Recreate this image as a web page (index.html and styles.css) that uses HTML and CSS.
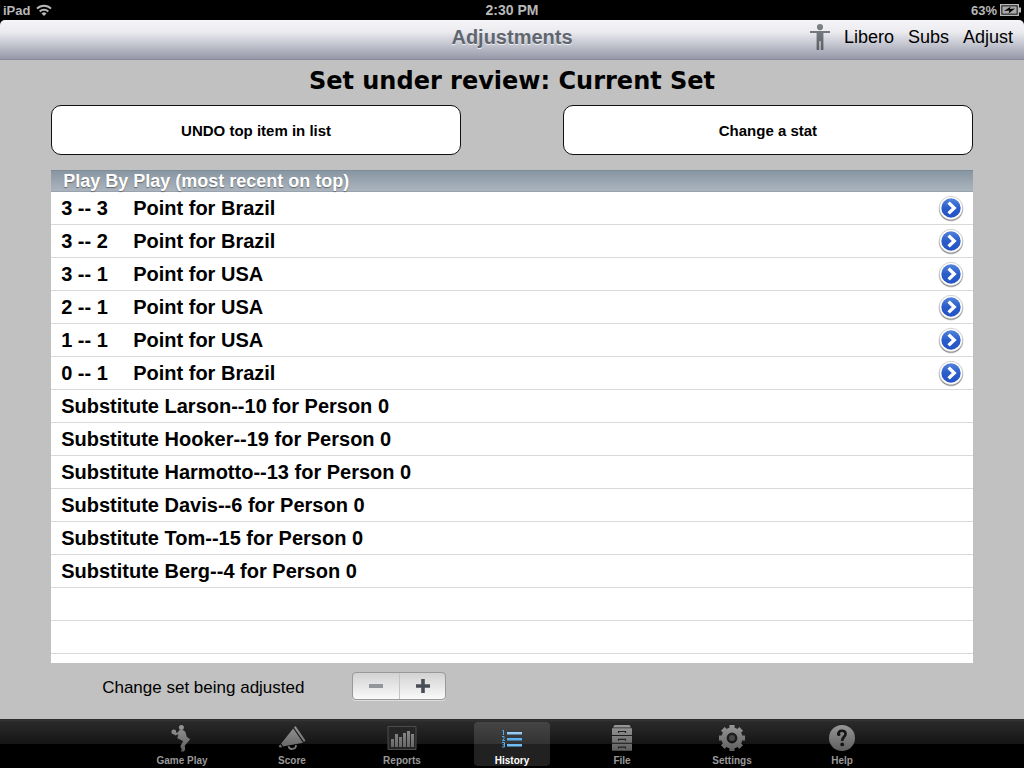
FILE: index.html
```html
<!DOCTYPE html>
<html lang="en">
<head>
    <meta charset="UTF-8">
    <title>Adjustments</title>
    <meta name="viewport" content="width=device-width, initial-scale=1.0">
    <link rel="stylesheet" href="styles.css">
</head>
<body>
    <svg class="defs" width="0" height="0" aria-hidden="true">
        <defs>
            <linearGradient id="blue" x1="0" y1="0" x2="0" y2="1">
                <stop offset="0" stop-color="#5484dc"/>
                <stop offset=".5" stop-color="#2a5dca"/>
                <stop offset="1" stop-color="#2352c4"/>
            </linearGradient>
            <linearGradient id="grey" gradientUnits="userSpaceOnUse" x1="0" y1="0" x2="0" y2="28">
                <stop offset="0" stop-color="#999"/>
                <stop offset="1" stop-color="#5c5c5c"/>
            </linearGradient>
            <linearGradient id="sky" gradientUnits="userSpaceOnUse" x1="0" y1="6" x2="0" y2="24">
                <stop offset="0" stop-color="#b4dcfa"/>
                <stop offset=".5" stop-color="#55aef2"/>
                <stop offset="1" stop-color="#7cc8fa"/>
            </linearGradient>
            <linearGradient id="steel" x1="0" y1="0" x2="0" y2="1">
                <stop offset="0" stop-color="#808388"/>
                <stop offset="1" stop-color="#5b5e63"/>
            </linearGradient>
        </defs>
        <symbol id="disclosure" viewBox="0 0 28 28">
            <circle cx="14" cy="15" r="12.4" fill="#000" opacity=".18"/>
            <circle cx="14" cy="14.8" r="11.8" fill="#000" opacity=".4"/>
            <circle cx="14" cy="14" r="11.7" fill="#fff" stroke="#bbb" stroke-width=".6"/>
            <circle cx="14" cy="14" r="9.7" fill="url(#blue)"/>
            <path d="M11.6 8.6 17.2 14l-5.6 5.4" fill="none" stroke="#fff" stroke-width="3.4"/>
        </symbol>
    </svg>

    <header>
        <div class="status">
            <span class="device">iPad
                <svg width="16" height="12" viewBox="0 0 16 12" aria-hidden="true">
                    <g fill="none" stroke="#b8b8b8" stroke-width="2">
                        <path d="M1 4.6a10 10 0 0 1 14 0"/>
                        <path d="M3.7 7.5a6.2 6.2 0 0 1 8.6 0"/>
                    </g>
                    <path d="M8 12 5.5 9.5a3.5 3.5 0 0 1 5 0z" fill="#b8b8b8"/>
                </svg>
            </span>
            <span class="time">2:30 PM</span>
            <span class="power">63%
                <svg width="21" height="12" viewBox="0 0 21 12" aria-hidden="true">
                    <rect x=".7" y=".7" width="17.6" height="10.6" fill="none" stroke="#b8b8b8" stroke-width="1.4"/>
                    <rect x="2.3" y="2.3" width="14.4" height="7.4" fill="#a8a8a8"/>
                    <path d="M18.5 3.5H21v5h-2.5z" fill="#b8b8b8"/>
                    <path d="m4 7 6.5-4.2-.6 2.3L15 4.6 8.6 9.4l.8-2.8z" fill="#000"/>
                </svg>
            </span>
        </div>
        <nav class="navbar">
            <h1>Adjustments</h1>
            <div class="actions">
                <svg width="20" height="26" viewBox="0 0 20 26" fill="url(#steel)" aria-hidden="true">
                    <path d="M10 0a3.1 3.1 0 1 1 0 6.2A3.1 3.1 0 0 1 10 0zM0 7h20v2.1h-6.6V26h-2.6v-8.8H9.2V26H6.6V9.1H0z"/>
                </svg>
                <a href="#libero">Libero</a>
                <a href="#subs">Subs</a>
                <a href="#adjust">Adjust</a>
            </div>
        </nav>
    </header>

    <main>
        <h2>Set under review: Current Set</h2>
        <div class="buttons">
            <button type="button">UNDO top item in list</button>
            <button type="button">Change a stat</button>
        </div>
        <section class="plays">
            <h3>Play By Play (most recent on top)</h3>
            <ul>
                <li><span class="score">3 -- 3</span>Point for Brazil<button type="button" aria-label="Details"><svg width="28" height="28"><use href="#disclosure"/></svg></button></li>
                <li><span class="score">3 -- 2</span>Point for Brazil<button type="button" aria-label="Details"><svg width="28" height="28"><use href="#disclosure"/></svg></button></li>
                <li><span class="score">3 -- 1</span>Point for USA<button type="button" aria-label="Details"><svg width="28" height="28"><use href="#disclosure"/></svg></button></li>
                <li><span class="score">2 -- 1</span>Point for USA<button type="button" aria-label="Details"><svg width="28" height="28"><use href="#disclosure"/></svg></button></li>
                <li><span class="score">1 -- 1</span>Point for USA<button type="button" aria-label="Details"><svg width="28" height="28"><use href="#disclosure"/></svg></button></li>
                <li><span class="score">0 -- 1</span>Point for Brazil<button type="button" aria-label="Details"><svg width="28" height="28"><use href="#disclosure"/></svg></button></li>
                <li>Substitute Larson--10 for Person 0</li>
                <li>Substitute Hooker--19 for Person 0</li>
                <li>Substitute Harmotto--13 for Person 0</li>
                <li>Substitute Davis--6 for Person 0</li>
                <li>Substitute Tom--15 for Person 0</li>
                <li>Substitute Berg--4 for Person 0</li>
                <li></li>
                <li></li>
            </ul>
        </section>
        <div class="change">
            <span id="change-label">Change set being adjusted</span>
            <div class="stepper" role="group" aria-labelledby="change-label">
                <button type="button" aria-label="Previous set" disabled>
                    <svg width="14" height="14" viewBox="0 0 14 14"><path d="M0 5h14v4H0z" fill="#92959a"/></svg>
                </button>
                <button type="button" aria-label="Next set">
                    <svg width="14" height="14" viewBox="0 0 14 14"><path d="M5.2 0h3.6v5.2H14v3.6H8.8V14H5.2V8.8H0V5.2h5.2z" fill="#484d55"/></svg>
                </button>
            </div>
        </div>
    </main>

    <footer>
        <a href="#game">
            <svg width="28" height="28" viewBox="0 0 28 28" fill="url(#grey)" aria-hidden="true">
                <circle cx="5.800" cy="8" r="2.400"/>
                <circle cx="13.400" cy="3.600" r="2.500"/>
                <path d="M11.500 6.200c2.200-.8 5 .1 6 2l1.200 4.600 3.500 2.400-3.800 4.500-1.700 2 .6 3.300-1.200 2.500h-3.200l.8-2.300-1.400-3 2.800-5-3-1.700-2.800-1.300 1.200-4-3.200 1.300-1.900-2 .9-1.200 3 .4z"/>
            </svg>
            <span>Game Play</span>
        </a>
        <a href="#score">
            <svg width="28" height="28" viewBox="0 0 28 28" fill="url(#grey)" aria-hidden="true">
                <path d="M17.5 2 27.5 16.5 26 18 16 3.5zM15.2 4.400 25 18.800 5 22.400 3.200 19.600zM2.400 20.200l1.800 2.800-2.400.8-1.100-1.700z"/>
                <path d="M10.500 22.200c1 4.200 7.500 3.600 7.500-1.200" fill="none" stroke="#777" stroke-width="1.8"/>
            </svg>
            <span>Score</span>
        </a>
        <a href="#reports">
            <svg width="30" height="28" viewBox="0 0 30 28" aria-hidden="true">
                <path d="M1 2.500h28v23H1z" fill="#262626" stroke="#4c4c4c"/>
                <path d="M4 15h3v8H4zM8 10h3v13H8zM12 13h3v10h-3zM16 9h3v14h-3zM20 7h3v16h-3zM24 10h3v13h-3z" fill="url(#grey)"/>
            </svg>
            <span>Reports</span>
        </a>
        <a href="#history" class="active" aria-current="page">
            <svg width="28" height="28" viewBox="0 0 28 28" aria-hidden="true">
                <path d="M9 8h15v2.500H9zM9 14h15v2.500H9zM9 20h15v2.500H9z" fill="url(#sky)"/>
                <g fill="none" stroke="#55aef2">
                    <path d="m4.500 7 1-1v5M4 12.500h2v2L4.500 16.500h2.500M4 18.500h2.500V23H4M4.500 20.800h2"/>
                </g>
            </svg>
            <span>History</span>
        </a>
        <a href="#file">
            <svg width="28" height="28" viewBox="0 0 28 28" fill="url(#grey)" aria-hidden="true">
                <path d="m6.500 1h15L23 3.400H5z"/>
                <path d="M4 4.200h20v6.700H4zM4 12h20v6.700H4zM4 19.800h20v7H4z"/>
                <path d="M10.500 9V7.500h7V9M10.500 16.800v-1.500h7v1.500M10.500 24.600v-1.500h7v1.500" fill="none" stroke="#222" stroke-width="1.2"/>
            </svg>
            <span>File</span>
        </a>
        <a href="#settings">
            <svg width="28" height="28" viewBox="0 0 28 28" aria-hidden="true">
                <g stroke="url(#grey)" stroke-width="5.200" fill="none">
                    <path d="M14.010 1 14 6M14.010 27 14 22M1 14.010 6 14M27 14.010 22 14M4.800 4.800l3.500 3.500M23.200 4.800l-3.500 3.500M4.800 23.200l3.500-3.500M23.200 23.200l-3.500-3.500"/>
                    <circle cx="14" cy="14" r="8"/>
                </g>
                <circle cx="14" cy="14" r="3" fill="#484848"/>
            </svg>
            <span>Settings</span>
        </a>
        <a href="#help">
            <svg width="28" height="28" viewBox="0 0 28 28" aria-hidden="true">
                <circle cx="14" cy="14" r="13" fill="url(#grey)"/>
                <path d="M10.300 10.500c-.5-5 7.300-4.800 7.300-.8 0 3-3.500 3.200-3.500 7.200" fill="none" stroke="#151515" stroke-width="2.600"/>
                <circle cx="10.800" cy="10.400" r="1.700" fill="#151515"/>
                <circle cx="14.200" cy="20.400" r="1.900" fill="#151515"/>
            </svg>
            <span>Help</span>
        </a>
    </footer>
</body>
</html>
```

FILE: styles.css
```css
*{ margin: 0; padding: 0; box-sizing: border-box; list-style: none}
html,body{
    height: 100%;
}
body{
    display: flex;
    flex-direction: column;
    background: #c1c1c1;
    color: #000;
    font-family: "Liberation Sans", Arial, sans-serif;
}
a{
    color: inherit;
    text-decoration: none;
}
button{
    font-family: inherit;
    color: inherit;
}
svg{
    display: block;
    flex-shrink: 0;
}
.defs{
    position: absolute;
}

/* status + navigation bar */
header{
    background: #000;
}
.status{
    display: grid;
    grid-template-columns: 1fr auto 1fr;
    align-items: center;
    height: 20px;
    padding: 0 3px;
    color: #b8b8b8;
    font-size: 13px;
    font-weight: bold;
}
.device,.power{
    display: flex;
    align-items: center;
    gap: 6px;
}
.power{
    justify-content: flex-end;
    gap: 3px;
}
.time{
    font-size: 14px;
}
.navbar{
    display: grid;
    grid-template-columns: 1fr auto 1fr;
    align-items: center;
    height: 40px;
    padding: 0 11px 5px;
    border-bottom: 1px solid #858899;
    border-radius: 5px 5px 0 0;
    background: linear-gradient(#f5f5f8, #ececf0 30%, #c6c8d2 60%, #9698a8);
}
.navbar h1{
    grid-column: 2;
    color: #5f666f;
    font-size: 20px;
    line-height: 24px;
    text-shadow: 0 1px 0 #eee;
}
.actions{
    display: flex;
    justify-content: flex-end;
    align-items: center;
    gap: 14px;
    font-size: 18px;
}

/* content */
main{
    flex: 1;
    display: flex;
    flex-direction: column;
    min-height: 0;
    padding: 0 5%;
}
h2{
    padding: 6px 0 9px;
    font-family: "DejaVu Sans", Verdana, sans-serif;
    font-size: 24px;
    line-height: 30px;
    text-align: center;
}
.buttons{
    display: grid;
    grid-template-columns: 1fr 1fr;
    gap: 102px;
}
.buttons button{
    height: 50px;
    border: 1px solid #111;
    border-radius: 10px;
    background: #fff;
    font-size: 15px;
    font-weight: bold;
}
.plays{
    flex: 1;
    min-height: 0;
    margin-top: 15px;
    overflow: hidden;
    background: #fff;
}
.plays h3{
    height: 22px;
    padding-left: 12px;
    border-top: 1px solid #7c8c98;
    border-bottom: 1px solid #98a3ae;
    background: linear-gradient(#8896a2, #abb4be);
    color: #fff;
    font-size: 18px;
    line-height: 21px;
    text-shadow: 0 1px 1px #666;
}
.plays li{
    display: flex;
    align-items: center;
    height: 33px;
    padding: 0 8px 0 10px;
    border-bottom: 1px solid #d9d9d9;
    font-size: 20px;
    font-weight: bold;
}
.score{
    width: 72px;
}
.plays li button{
    margin-left: auto;
    border: 0;
    background: none;
}
.change{
    display: flex;
    align-items: flex-start;
    gap: 48px;
    height: 56px;
    padding: 9px 51px 0;
    font-size: 17px;
    line-height: 32px;
}
.stepper{
    display: flex;
    height: 28px;
    border: 1px solid #999;
    border-radius: 4px;
    background: linear-gradient(#d2d2d2, #fafafa);
    box-shadow: 0 1px 0 #ddd;
}
.stepper button{
    display: flex;
    align-items: center;
    justify-content: center;
    width: 46px;
    border: 0;
    background: none;
}
.stepper button + button{
    border-left: 1px solid #c4c4c4;
}

/* tab bar */
footer{
    display: flex;
    justify-content: center;
    gap: 34px;
    height: 49px;
    padding: 2px 0;
    border-top: 1px solid #2c2c2c;
    background: linear-gradient(#353535, #2a2a2a 2px, #151515 24px, #000 24px);
    color: #999;
    font-size: 10px;
    font-weight: bold;
}
footer a{
    display: flex;
    flex-direction: column;
    align-items: center;
    gap: 3px;
    width: 76px;
    padding-top: 2px;
    border-radius: 4px;
    line-height: 12px;
}
footer .active{
    background: rgba(255,255,255,.13);
    color: #fff;
}
```
